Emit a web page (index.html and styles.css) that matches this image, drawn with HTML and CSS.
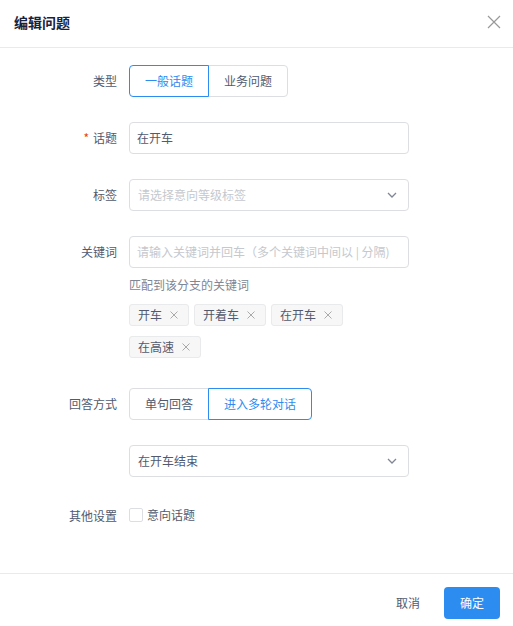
FILE: index.html
```html
<!DOCTYPE html>
<html lang="zh-CN">
<head>
    <meta charset="UTF-8">
    <meta name="viewport" content="width=device-width, initial-scale=1.0">
    <title>编辑问题</title>
    <link rel="stylesheet" href="styles.css">
</head>
<body>
<div class="modal">
    <header class="modal-header">
        <span class="modal-title">编辑问题</span>
        <button class="close-btn" aria-label="关闭">
            <svg width="14" height="14" viewBox="0 0 14 14">
                <path d="M1 1 L13 13 M13 1 L1 13" stroke="#999" stroke-width="1.2" fill="none"/>
            </svg>
        </button>
    </header>

    <main class="modal-body">
        <div class="form-item">
            <label class="form-label">类型</label>
            <div class="form-content">
                <div class="radio-group">
                    <span class="radio-btn active">一般话题</span>
                    <span class="radio-btn">业务问题</span>
                </div>
            </div>
        </div>

        <div class="form-item">
            <label class="form-label"><span class="required">*</span>话题</label>
            <div class="form-content">
                <div class="input">在开车</div>
            </div>
        </div>

        <div class="form-item">
            <label class="form-label">标签</label>
            <div class="form-content">
                <div class="input select placeholder">
                    请选择意向等级标签
                    <svg class="arrow" width="10" height="6" viewBox="0 0 10 6">
                        <path d="M1 1 L5 5 L9 1" stroke="#808695" stroke-width="1.3" fill="none"/>
                    </svg>
                </div>
            </div>
        </div>

        <div class="form-item keywords">
            <label class="form-label">关键词</label>
            <div class="form-content">
                <div class="input placeholder">请输入关键词并回车（多个关键词中间以 | 分隔)</div>
                <div class="help">匹配到该分支的关键词</div>
                <div class="tags">
                    <span class="tag">开车<svg class="tag-close" width="8" height="8" viewBox="0 0 8 8"><path d="M0.5 0.5 L7.5 7.5 M7.5 0.5 L0.5 7.5" stroke="#aaa" stroke-width="1" fill="none"/></svg></span>
                    <span class="tag">开着车<svg class="tag-close" width="8" height="8" viewBox="0 0 8 8"><path d="M0.5 0.5 L7.5 7.5 M7.5 0.5 L0.5 7.5" stroke="#aaa" stroke-width="1" fill="none"/></svg></span>
                    <span class="tag">在开车<svg class="tag-close" width="8" height="8" viewBox="0 0 8 8"><path d="M0.5 0.5 L7.5 7.5 M7.5 0.5 L0.5 7.5" stroke="#aaa" stroke-width="1" fill="none"/></svg></span>
                    <span class="tag">在高速<svg class="tag-close" width="8" height="8" viewBox="0 0 8 8"><path d="M0.5 0.5 L7.5 7.5 M7.5 0.5 L0.5 7.5" stroke="#aaa" stroke-width="1" fill="none"/></svg></span>
                </div>
            </div>
        </div>

        <div class="form-item">
            <label class="form-label">回答方式</label>
            <div class="form-content">
                <div class="radio-group">
                    <span class="radio-btn">单句回答</span>
                    <span class="radio-btn active">进入多轮对话</span>
                </div>
            </div>
        </div>

        <div class="form-item">
            <label class="form-label"></label>
            <div class="form-content">
                <div class="input select">
                    在开车结束
                    <svg class="arrow" width="10" height="6" viewBox="0 0 10 6">
                        <path d="M1 1 L5 5 L9 1" stroke="#808695" stroke-width="1.3" fill="none"/>
                    </svg>
                </div>
            </div>
        </div>

        <div class="form-item last">
            <label class="form-label">其他设置</label>
            <div class="form-content">
                <label class="checkbox"><span class="check-box"></span>意向话题</label>
            </div>
        </div>
    </main>

    <footer class="modal-footer">
        <button class="btn btn-text">取消</button>
        <button class="btn btn-primary">确定</button>
    </footer>
</div>
</body>
</html>
```

FILE: styles.css
```css
body {
    margin: 0;
    padding: 0;
    background: #ffffff;
    font-family: "Noto Sans CJK SC", "Noto Sans", sans-serif;
    font-size: 12px;
    color: #515a6e;
}

.modal {
    width: 513px;
    height: 626px;
    display: flex;
    flex-direction: column;
}

.modal-header {
    height: 47px;
    display: flex;
    align-items: center;
    justify-content: space-between;
    padding: 0 12px 0 14px;
    border-bottom: 1px solid #e8eaec;
    flex-shrink: 0;
}

.modal-title {
    font-size: 14px;
    font-weight: bold;
    color: #17233d;
    line-height: 20px;
    margin-top: -4px;
}

.close-btn {
    background: none;
    border: none;
    padding: 0;
    width: 14px;
    height: 14px;
    cursor: pointer;
    margin-top: -3px;
}

.modal-body {
    flex: 1;
    padding: 17px 0 0 17px;
}

.form-item {
    display: flex;
    height: 32px;
    margin-bottom: 25px;
}

.form-item.keywords {
    height: auto;
    margin-bottom: 30px;
}

.form-label {
    width: 100px;
    padding-right: 12px;
    text-align: right;
    line-height: 32px;
    height: 32px;
    flex-shrink: 0;
}

.required {
    color: #ed4014;
    margin-right: 4px;
    line-height: 1;
}

.form-content {
    width: 280px;
}

.radio-group {
    display: flex;
}

.radio-btn {
    height: 30px;
    line-height: 30px;
    padding: 0 15px;
    border: 1px solid #dcdee2;
    color: #515a6e;
    background: #fff;
}

.radio-btn:first-child {
    border-radius: 4px 0 0 4px;
}

.radio-btn:last-child {
    border-radius: 0 4px 4px 0;
    margin-left: -1px;
}

.radio-btn.active {
    border-color: #2d8cf0;
    color: #2d8cf0;
    position: relative;
}

.input {
    height: 30px;
    line-height: 30px;
    border: 1px solid #dcdee2;
    border-radius: 4px;
    padding: 0 7px;
    color: #515a6e;
    display: flex;
    align-items: center;
    justify-content: space-between;
    white-space: nowrap;
}

.input.placeholder {
    color: #c5c8ce;
}

.select {
    padding-left: 8px;
    padding-right: 11px;
}

.help {
    color: #808695;
    line-height: 20px;
    margin-top: 7px;
}

.tags {
    display: flex;
    flex-wrap: wrap;
    gap: 10px 5px;
    margin-top: 9px;
    width: 230px;
}

.tag {
    height: 20px;
    line-height: 20px;
    padding: 0 10px 0 8px;
    background: #f7f7f7;
    border: 1px solid #e8eaec;
    border-radius: 3px;
    color: #515a6e;
    display: flex;
    align-items: center;
}

.tag-close {
    margin-left: 8px;
}

.form-item.last {
    margin-top: -2px;
    margin-bottom: 0;
}

.checkbox {
    display: flex;
    align-items: center;
    line-height: 32px;
    margin-top: -1px;
}

.check-box {
    width: 12px;
    height: 12px;
    border: 1px solid #dcdee2;
    border-radius: 2px;
    margin-right: 4px;
    background: #fff;
}

.modal-footer {
    height: 52px;
    border-top: 1px solid #e8eaec;
    display: flex;
    align-items: center;
    justify-content: flex-end;
    padding: 0 13px 0 0;
    gap: 12px;
    flex-shrink: 0;
}

.btn {
    height: 32px;
    border: none;
    border-radius: 4px;
    font-family: "Noto Sans CJK SC", "Noto Sans", sans-serif;
    font-size: 12px;
    padding: 0 16px;
    cursor: pointer;
    margin-top: 5px;
}

.btn-text {
    background: none;
    color: #515a6e;
    padding: 0 12px;
}

.btn-primary {
    background: #2d8cf0;
    color: #fff;
    width: 56px;
}
```
